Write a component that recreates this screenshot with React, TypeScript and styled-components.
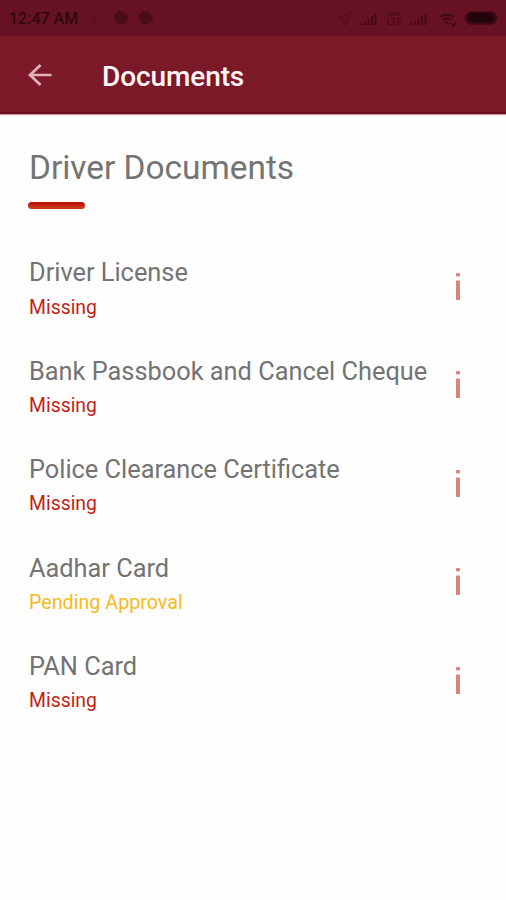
import React from "react";
import styled, { createGlobalStyle } from "styled-components";

const GlobalStyle = createGlobalStyle`
  * { box-sizing: border-box; }
  body { margin: 0; background: #fefefe; font-family: Roboto, "Liberation Sans", sans-serif; }
`;

const Screen = styled.div`
  width: 506px;
  height: 900px;
  display: flex;
  flex-direction: column;
  overflow: hidden;
  background: #fefefe;
`;

const StatusBar = styled.div`
  height: 36px;
  flex: none;
  display: flex;
  align-items: center;
  justify-content: space-between;
  padding-left: 9px;
  background: #671222;
  color: #2f0710;
`;

const Clock = styled.span`
  width: 82px;
  font-size: 16px;
  line-height: 36px;
  padding-top: 1px;
  font-weight: 500;
  white-space: nowrap;
`;

const Notifications = styled.div`
  display: flex;
  flex: 1;
`;

const AppBar = styled.header`
  height: 78px;
  flex: none;
  display: flex;
  align-items: center;
  padding: 2px 0 0 28px;
  background: #7c1929;
  border-bottom: 2px solid #6c0c20;
  box-shadow: 0 1px 1px #c99aa3;
`;

const BackButton = styled.button`
  width: 74px;
  height: 24px;
  padding: 0;
  border: 0;
  background: none;
  display: flex;
`;

const BarTitle = styled.h1`
  margin: 4px 0 0;
  font-size: 28px;
  line-height: 36px;
  font-weight: 500;
  letter-spacing: -0.1px;
  color: #fff5f5;
`;

const Content = styled.main`
  padding: 32px 29px 0;
`;

const Heading = styled.h2`
  margin: 0;
  font-size: 33.4px;
  line-height: 43px;
  font-weight: 400;
  color: #747474;
  white-space: nowrap;
`;

const Accent = styled.div`
  width: 57px;
  height: 7px;
  margin: 13px 0 0 -1px;
  border-radius: 4px;
  background: linear-gradient(#b9140e 20%, #c8381a 75%);
`;

const List = styled.ul`
  list-style: none;
  margin: 46px 0 0;
  padding: 0;
`;

const Item = styled.li`
  height: 98.4px;
  display: flex;
  justify-content: space-between;
`;

const ItemTitle = styled.div`
  font-size: 25.35px;
  line-height: 34px;
  padding-top: 0.4px;
  color: #737373;
  white-space: nowrap;
`;

const ItemStatus = styled.div<{ $pending?: boolean }>`
  margin-top: 5.3px;
  font-size: ${(p) => (p.$pending ? "19.7px" : "19.4px")};
  line-height: 26px;
  color: ${(p) => (p.$pending ? "#f8b91c" : "#c41f14")};
`;

const InfoButton = styled.button`
  width: 6px;
  height: 30px;
  margin: 17px 16px 0 0;
  padding: 0;
  border: 0;
  background: none;
  display: flex;
`;

const documents = [
  { title: "Driver License", status: "Missing" },
  { title: "Bank Passbook and Cancel Cheque", status: "Missing" },
  { title: "Police Clearance Certificate", status: "Missing" },
  { title: "Aadhar Card", status: "Pending Approval", pending: true },
  { title: "PAN Card", status: "Missing" },
];

function NotificationIcons() {
  return (
    <svg width="76" height="36" viewBox="91 0 76 36" aria-hidden="true">
      <path d="M93 15l2 6 4-8" fill="none" stroke="#5b1020" strokeWidth="1.5" />
      <path d="M114 15l4-4 6 1 4 4-1 6-5 3-5-2-3-4z" fill="#4b0c19" />
      <path d="M139 14l4-3 6 1 4 5-1 5-5 3-5-2-3-4z" fill="#4b0c19" />
    </svg>
  );
}

function SystemIcons() {
  return (
    <svg width="170" height="36" viewBox="336 0 170 36" aria-hidden="true">
      <path d="M338 18l13-5-6 12-2-6z" fill="none" stroke="#560f1d" strokeWidth="1.5" />
      <path
        d="M361.5 25v-2M365 25v-4M368.5 25v-7M372 25v-9M375.5 25v-11M411.5 25v-2M415 25v-4M418.500 25v-7M422 25v-9M425.500 25v-11"
        stroke="#450a17"
        strokeWidth="2"
      />
      <g fill="#490b18" fontFamily="Roboto" fontWeight="700" textAnchor="middle">
        <text x="394" y="16" fontSize="5.5" textLength="14" lengthAdjust="spacingAndGlyphs">VOW</text>
        <text x="394" y="25" fontSize="8.5" textLength="15" lengthAdjust="spacingAndGlyphs">LTE</text>
      </g>
      <g fill="none" stroke="#410914" strokeWidth="1.8">
        <path d="M440 17q7-5 14 0M442.500 20q4.500-3 9 0M445 23q2-1.500 4 0" />
        <path d="M451 23l3 3 2-4" />
      </g>
      <rect x="465" y="11.500" width="32" height="13" rx="6.500" fill="#390711" stroke="#4d0b19" />
      <rect x="468" y="13" width="25" height="9" rx="4.500" fill="#210309" />
    </svg>
  );
}

export default function App() {
  return (
    <>
      <GlobalStyle />
      <Screen>
        <StatusBar>
          <Clock>12:47 AM</Clock>
          <Notifications>
            <NotificationIcons />
          </Notifications>
          <SystemIcons />
        </StatusBar>
        <AppBar>
          <BackButton aria-label="Back">
            <svg width="24" height="24" viewBox="0 0 24 24">
              <path d="M23.500 12H2.500M12.500 2L2 12l10.500 10" fill="none" stroke="#e0b3bb" strokeWidth="2.700" />
            </svg>
          </BackButton>
          <BarTitle>Documents</BarTitle>
        </AppBar>
        <Content>
          <Heading>Driver Documents</Heading>
          <Accent />
          <List>
            {documents.map((doc) => (
              <Item key={doc.title}>
                <div>
                  <ItemTitle>{doc.title}</ItemTitle>
                  <ItemStatus $pending={doc.pending}>{doc.status}</ItemStatus>
                </div>
                <InfoButton aria-label={`About ${doc.title}`}>
                  <svg width="6" height="30" viewBox="0 0 6 30" fill="#d8867d">
                    <rect x="1" y="1" width="4" height="3.500" rx="1" />
                    <rect x="1" y="8.500" width="4" height="19.500" rx="0.500" />
                  </svg>
                </InfoButton>
              </Item>
            ))}
          </List>
        </Content>
      </Screen>
    </>
  );
}
